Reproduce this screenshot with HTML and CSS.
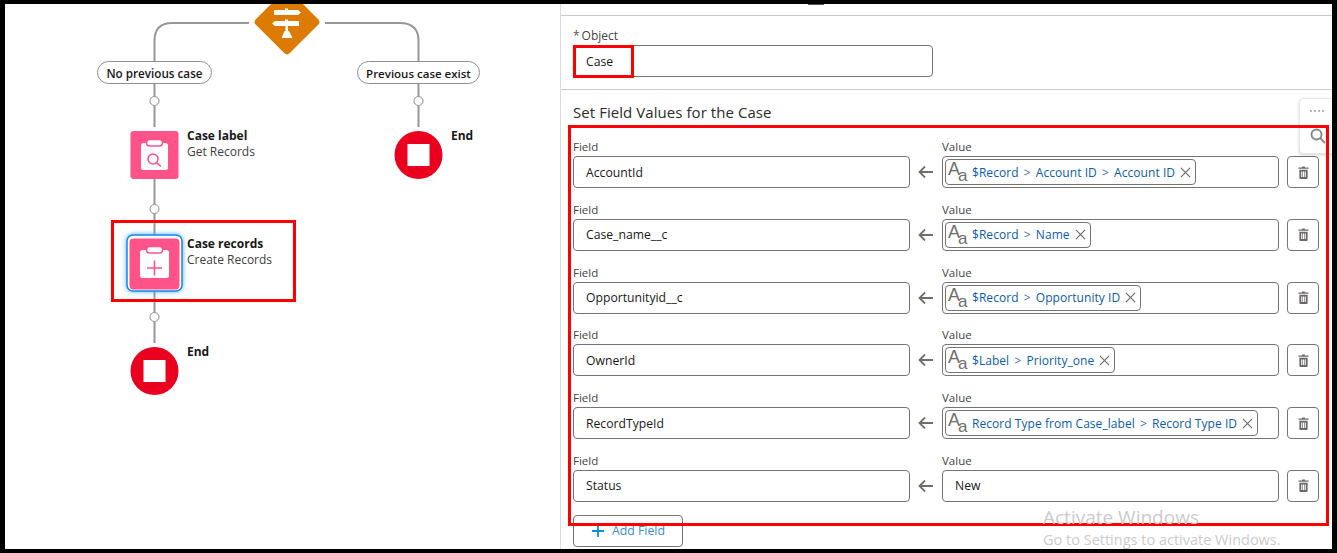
FILE: index.html
```html
<!DOCTYPE html>
<html lang="en">
<head>
<meta charset="utf-8">
<title>Flow builder - Create Records</title>
<link rel="stylesheet" href="styles.css">
</head>
<body>
<div class="frame">
  <section class="canvas">
    <svg class="diagram" width="555" height="545" viewBox="5 4 555 545" aria-hidden="true">
      <g class="wire">
        <path d="M249 23H172Q154.500 23 154.500 41V62M154.500 84V96M154.500 106V127M154.500 179V204M154.500 214V236M154.500 291V312M154.500 322V343"/>
        <path d="M325 23H400Q418.500 23 418.500 41V62M418.500 84V96M418.500 106V127"/>
      </g>
      <circle class="port" cx="154.500" cy="101" r="4.500"/>
      <circle class="port" cx="154.500" cy="209" r="4.500"/>
      <circle class="port" cx="154.500" cy="317" r="4.500"/>
      <circle class="port" cx="418.500" cy="101" r="4.500"/>

      <rect class="decision" x="263" y="-2" width="48" height="48" rx="4" transform="rotate(45 287 22)"/>
      <g class="glyph">
        <path d="M274 10H285V8.500H288V10H298L301 12.500L298 15H274Z"/>
        <path d="M275 21H285V19.500H288V21H299V26H275L272 23.500Z"/>
        <rect x="285.500" y="26" width="2.500" height="5"/>
        <path d="M281.500 38L284.500 31H289L292.500 38Z"/>
      </g>

      <rect class="pink" x="130.500" y="131" width="48" height="48" rx="3"/>
      <rect class="glyph" x="141" y="143" width="27" height="27" rx="2.500"/>
      <rect class="tab" x="146.500" y="139.500" width="16" height="6.500" rx="3"/>
      <circle class="pink-line" cx="153" cy="159" r="5"/>
      <path class="pink-line" d="M156.800 162.800L161 166.500"/>

      <rect class="halo" x="127" y="235" width="55" height="56" rx="6"/>
      <rect class="pink" x="129.500" y="238.500" width="50" height="51" rx="4"/>
      <rect class="glyph" x="140" y="250" width="29" height="28" rx="2.500"/>
      <rect class="tab" x="146.500" y="246.500" width="16" height="6.500" rx="3"/>
      <path class="pink-line" d="M147 268H162M154.500 260.500V275.500"/>

      <circle class="stop" cx="154.500" cy="371" r="24"/>
      <rect class="glyph" x="143.500" y="360" width="22" height="22"/>
      <circle class="stop" cx="418.500" cy="155" r="24"/>
      <rect class="glyph" x="407.500" y="144" width="22" height="22"/>
    </svg>

    <span class="pill pill-no">No previous case</span>
    <span class="pill pill-yes">Previous case exist</span>

    <div class="node node-get"><strong>Case label</strong><span>Get Records</span></div>
    <div class="node node-create"><strong>Case records</strong><span>Create Records</span></div>
    <div class="node node-end-a"><strong>End</strong></div>
    <div class="node node-end-b"><strong>End</strong></div>
  </section>

  <section class="panel">
    <div class="panel-top"><i class="grip"></i></div>
    <div class="object-section">
      <label class="object-label"><abbr>*</abbr>Object</label>
      <div class="box object-box">Case</div>
    </div>
    <div class="values-section">
      <h2 class="values-title">Set Field Values for the Case</h2>

      <div class="row">
        <div class="cell"><label>Field</label><div class="box">AccountId</div></div>
        <svg class="arrow" viewBox="0 0 16 12"><path d="M15 6H2M7 .5L1.500 6L7 11.500"/></svg>
        <div class="cell"><label>Value</label><div class="box box-chip"><span class="chip"><span class="aa"><b>A</b><i>a</i></span><span class="ref">$Record <span class="gt">&gt;</span> Account ID <span class="gt">&gt;</span> Account ID</span><svg class="x" viewBox="0 0 12 12"><path d="M1 1L11 11M11 1L1 11"/></svg></span></div></div>
        <button class="trash" type="button"><svg viewBox="0 0 12 14"><path d="M4.500 1.500V.5H7.500V1.500H11.500V3H.5V1.500ZM1.500 4H10.500V13Q10.500 14 9.500 14H2.500Q1.500 14 1.500 13ZM3.500 6V12H4.700V6ZM5.400 6V12H6.600V6ZM7.300 6V12H8.500V6Z"/></svg></button>
      </div>

      <div class="row">
        <div class="cell"><label>Field</label><div class="box">Case_name__c</div></div>
        <svg class="arrow" viewBox="0 0 16 12"><path d="M15 6H2M7 .5L1.500 6L7 11.500"/></svg>
        <div class="cell"><label>Value</label><div class="box box-chip"><span class="chip"><span class="aa"><b>A</b><i>a</i></span><span class="ref">$Record <span class="gt">&gt;</span> Name</span><svg class="x" viewBox="0 0 12 12"><path d="M1 1L11 11M11 1L1 11"/></svg></span></div></div>
        <button class="trash" type="button"><svg viewBox="0 0 12 14"><path d="M4.500 1.500V.5H7.500V1.500H11.500V3H.5V1.500ZM1.500 4H10.500V13Q10.500 14 9.500 14H2.500Q1.500 14 1.500 13ZM3.500 6V12H4.700V6ZM5.400 6V12H6.600V6ZM7.300 6V12H8.500V6Z"/></svg></button>
      </div>

      <div class="row">
        <div class="cell"><label>Field</label><div class="box">Opportunityid__c</div></div>
        <svg class="arrow" viewBox="0 0 16 12"><path d="M15 6H2M7 .5L1.500 6L7 11.500"/></svg>
        <div class="cell"><label>Value</label><div class="box box-chip"><span class="chip"><span class="aa"><b>A</b><i>a</i></span><span class="ref">$Record <span class="gt">&gt;</span> Opportunity ID</span><svg class="x" viewBox="0 0 12 12"><path d="M1 1L11 11M11 1L1 11"/></svg></span></div></div>
        <button class="trash" type="button"><svg viewBox="0 0 12 14"><path d="M4.500 1.500V.5H7.500V1.500H11.500V3H.5V1.500ZM1.500 4H10.500V13Q10.500 14 9.500 14H2.500Q1.500 14 1.500 13ZM3.500 6V12H4.700V6ZM5.400 6V12H6.600V6ZM7.300 6V12H8.500V6Z"/></svg></button>
      </div>

      <div class="row">
        <div class="cell"><label>Field</label><div class="box">OwnerId</div></div>
        <svg class="arrow" viewBox="0 0 16 12"><path d="M15 6H2M7 .5L1.500 6L7 11.500"/></svg>
        <div class="cell"><label>Value</label><div class="box box-chip"><span class="chip"><span class="aa"><b>A</b><i>a</i></span><span class="ref">$Label <span class="gt">&gt;</span> Priority_one</span><svg class="x" viewBox="0 0 12 12"><path d="M1 1L11 11M11 1L1 11"/></svg></span></div></div>
        <button class="trash" type="button"><svg viewBox="0 0 12 14"><path d="M4.500 1.500V.5H7.500V1.500H11.500V3H.5V1.500ZM1.500 4H10.500V13Q10.500 14 9.500 14H2.500Q1.500 14 1.500 13ZM3.500 6V12H4.700V6ZM5.400 6V12H6.600V6ZM7.300 6V12H8.500V6Z"/></svg></button>
      </div>

      <div class="row">
        <div class="cell"><label>Field</label><div class="box">RecordTypeId</div></div>
        <svg class="arrow" viewBox="0 0 16 12"><path d="M15 6H2M7 .5L1.500 6L7 11.500"/></svg>
        <div class="cell"><label>Value</label><div class="box box-chip"><span class="chip"><span class="aa"><b>A</b><i>a</i></span><span class="ref">Record Type from Case_label <span class="gt">&gt;</span> Record Type ID</span><svg class="x" viewBox="0 0 12 12"><path d="M1 1L11 11M11 1L1 11"/></svg></span></div></div>
        <button class="trash" type="button"><svg viewBox="0 0 12 14"><path d="M4.500 1.500V.5H7.500V1.500H11.500V3H.5V1.500ZM1.500 4H10.500V13Q10.500 14 9.500 14H2.500Q1.500 14 1.500 13ZM3.500 6V12H4.700V6ZM5.400 6V12H6.600V6ZM7.300 6V12H8.500V6Z"/></svg></button>
      </div>

      <div class="row">
        <div class="cell"><label>Field</label><div class="box">Status</div></div>
        <svg class="arrow" viewBox="0 0 16 12"><path d="M15 6H2M7 .5L1.500 6L7 11.500"/></svg>
        <div class="cell"><label>Value</label><div class="box">New</div></div>
        <button class="trash" type="button"><svg viewBox="0 0 12 14"><path d="M4.500 1.500V.5H7.500V1.500H11.500V3H.5V1.500ZM1.500 4H10.500V13Q10.500 14 9.500 14H2.500Q1.500 14 1.500 13ZM3.500 6V12H4.700V6ZM5.400 6V12H6.600V6ZM7.300 6V12H8.500V6Z"/></svg></button>
      </div>

      <button class="add" type="button"><svg viewBox="0 0 12 12"><path d="M6 0V12M0 6H12"/></svg>Add Field</button>
    </div>
  </section>

  <div class="tools">
    <span class="tools-dots"></span>
    <svg class="tools-search" viewBox="0 0 16 16"><circle cx="6.500" cy="6.500" r="5"/><path d="M10.200 10.200L15 15"/></svg>
  </div>

  <div class="mark mark-case"></div>
  <div class="mark mark-values"></div>
  <div class="mark mark-node"></div>

  <div class="watermark"><p class="wm-big">Activate Windows</p><p class="wm-small">Go to Settings to activate Windows.</p></div>
</div>
</body>
</html>
```

FILE: styles.css
```css
* { box-sizing: border-box; }
html, body { margin: 0; padding: 0; background: #000; }
body { width: 1337px; height: 553px; overflow: hidden; font-family: "Open Sans", "Noto Sans", sans-serif; color: #181818; }

.frame {
  position: relative;
  display: flex;
  width: 1337px;
  height: 553px;
  border: solid #000;
  border-width: 4px 5px 4px 5px;
  background: #fff;
  overflow: hidden;
}

/* Canvas */
.canvas { position: relative; flex: 0 0 555px; height: 100%; overflow: hidden; }
.diagram { position: absolute; left: 0; top: 0; display: block; }
.wire path { fill: none; stroke: #979797; stroke-width: 2; }
.port { fill: #fff; stroke: #8c8c8c; stroke-width: 1; }
.decision { fill: #dd7a01; }
.glyph { fill: #fff; }
.pink { fill: #ff538a; }
.tab { fill: #fff; stroke: #ff538a; stroke-width: 1.500; }
.pink-line { fill: none; stroke: #ff538a; stroke-width: 1.600; }
.halo { fill: #fff; stroke: #1589ee; stroke-width: 1.500; filter: drop-shadow(0 0 2.500px #4fb0ff); }
.stop { fill: #ea001e; }

.pill {
  position: absolute;
  height: 23px;
  padding-top: 1px;
  display: flex;
  align-items: center;
  justify-content: center;
  background: #fff;
  border: 1px solid #8f8f8f;
  border-radius: 12px;
  font-size: 11.700px;
  font-weight: 600;
  white-space: nowrap;
}
.pill-no { left: 92px; top: 57px; width: 115px; }
.pill-yes { left: 352px; top: 57px; width: 123px; font-size: 11.500px; }

.node { position: absolute; display: flex; flex-direction: column; font-size: 12px; line-height: 16px; white-space: nowrap; }
.node strong { font-weight: 700; }
.node span { color: #3e3e3c; }
.node-get { left: 182px; top: 124px; }
.node-create { left: 182px; top: 232px; }
.node-end-a { left: 182px; top: 340px; }
.node-end-b { left: 446px; top: 124px; }

/* Panel */
.panel { flex: 1; display: flex; flex-direction: column; border-left: 1px solid #dcdcdc; min-width: 0; }
.panel-top { position: relative; flex: 0 0 12px; border-bottom: 1px solid #c9c9c9; }
.grip { position: absolute; left: 247px; top: 0; width: 16px; height: 1px; background: #555; }

.object-section { flex: 0 0 74px; padding: 11px 0 0 12px; border-bottom: 1px solid #c9c9c9; }
.object-label { display: block; height: 18px; font-size: 12px; line-height: 17px; color: #444; }
.object-label abbr { color: #555; margin-right: 2px; }
.object-box { width: 360px; padding-left: 12px; }

.box {
  display: flex;
  align-items: center;
  height: 32px;
  padding: 0 12px;
  border: 1px solid #747474;
  border-radius: 4px;
  background: #fff;
  font-size: 12.200px;
  color: #181818;
}
.box-chip { padding: 0 2px; }

.values-section { flex: 1; padding: 12px 0 0 12px; }
.values-title { margin: 0 0 17px; font-size: 15px; line-height: 20px; font-weight: 400; letter-spacing: .06px; color: #2b2b2b; }

.row {
  display: grid;
  grid-template-columns: 337px 32px 337px 32px;
  align-items: end;
  height: 62.800px;
  padding-bottom: 13.800px;
}
.row .trash { margin-left: 8px; }
.cell label { display: block; padding-bottom: 1px; font-size: 11.500px; line-height: 16px; color: #444; }
.arrow { justify-self: center; width: 16px; height: 12px; margin-bottom: 10px; fill: none; stroke: #706e6b; stroke-width: 1.800; }

.chip {
  display: inline-flex;
  align-items: center;
  height: 26px;
  padding: 0 2px;
  border: 1px solid #747474;
  border-radius: 4px;
  white-space: nowrap;
}
.aa { display: flex; align-items: flex-start; width: 24px; height: 24px; color: #706e6b; font-family: "Liberation Sans", sans-serif; }
.aa b { font-size: 18px; line-height: 18px; font-weight: 400; margin-top: 0; }
.aa i { font-size: 17px; line-height: 17px; font-style: normal; margin: 7px 0 0 -2px; }
.ref { color: #0b5cab; font-size: 12px; letter-spacing: .05px; }
.gt { margin: 0 2px; color: #3f6ea5; }
.x { width: 11px; height: 11px; margin: 0 2px 0 5px; fill: none; stroke: #706e6b; stroke-width: 1.300; }

.trash {
  display: flex;
  align-items: center;
  justify-content: center;
  width: 32px;
  height: 32px;
  padding: 0;
  background: #fff;
  border: 1px solid #747474;
  border-radius: 4px;
}
.trash svg { width: 11px; height: 13px; fill: #6b6967; }

.add {
  display: flex;
  align-items: center;
  width: 110px;
  height: 32px;
  margin-top: -1px;
  padding: 0 0 0 18px;
  background: #fff;
  border: 1px solid #747474;
  border-radius: 4px;
  font: 12.300px "Open Sans", "Noto Sans", sans-serif;
  color: #3c8fd0;
}
.add svg { width: 12px; height: 12px; margin-right: 8px; fill: none; stroke: #0c8fdc; stroke-width: 1.800; }

/* Overlays */
.tools {
  position: absolute;
  left: 1294px;
  top: 94px;
  width: 44px;
  height: 56px;
  background: #fff;
  border: 1px solid #e6e6e6;
  border-radius: 4px;
  box-shadow: 0 1px 3px rgba(0, 0, 0, .18);
}
.tools-dots { position: absolute; left: 10px; top: 11px; width: 16px; height: 2px; background: repeating-linear-gradient(90deg, #b5b5b5 0 2px, transparent 2px 4px); }
.tools-search { position: absolute; left: 10px; top: 29px; width: 16px; height: 16px; fill: none; stroke: #858585; stroke-width: 1.900; }

.mark { position: absolute; border: 3px solid #f00; pointer-events: none; }
.mark-case { left: 568px; top: 41px; width: 61px; height: 33px; }
.mark-values { left: 563px; top: 121px; width: 761px; height: 401px; }
.mark-node { left: 106px; top: 216px; width: 185px; height: 82px; }

.watermark { position: absolute; left: 1038px; top: 501px; color: #cbcbcb; white-space: nowrap; font-family: "Open Sans", "Noto Sans", sans-serif; }
.watermark p { margin: 0; }
.wm-big { font-size: 19px; line-height: 24px; }
.wm-small { font-size: 14.500px; line-height: 21px; }
```
